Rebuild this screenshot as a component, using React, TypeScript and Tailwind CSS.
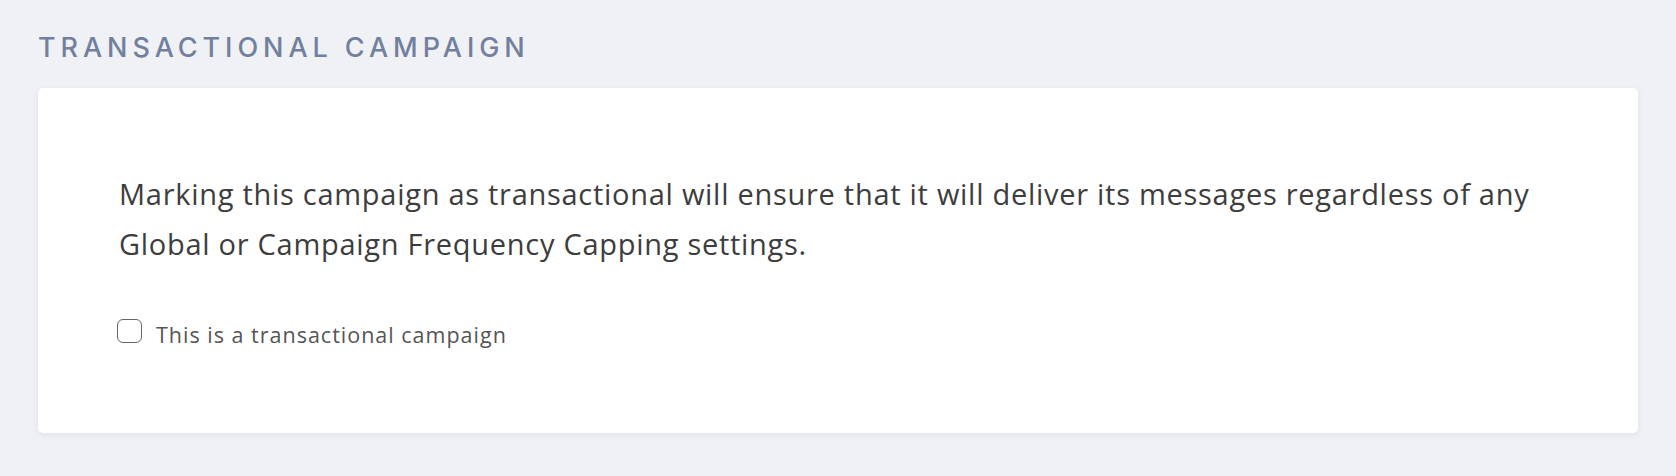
export default function App() {
  return (
    <div className="min-h-[476px] w-full bg-[#eff1f5] px-[38px] pt-[30px]">
      <h2
        className="text-[27px] leading-[36px] font-medium tracking-[0.183em] text-[#72809d] uppercase"
        style={{ fontFamily: "Inter, 'DejaVu Sans', sans-serif" }}
      >
        Transactional Campaign
      </h2>
      <div
        className="mt-[22px] h-[345px] w-[1600px] rounded-[5px] bg-white px-[81px] pt-[81px] shadow-[0_2px_6px_rgba(40,50,80,0.08)]"
        style={{ fontFamily: "'Open Sans', sans-serif" }}
      >
        <p className="max-w-[1450px] text-[29px] leading-[50px] tracking-[0.72px] text-[#3d3d3d]">
          Marking this campaign as transactional will ensure that it will deliver its messages regardless of any Global or Campaign Frequency Capping settings.
        </p>
        <label className="-ml-[2px] mt-[50px] flex items-start gap-[14px] text-[21.5px] leading-[24px] tracking-[1px] text-[#555]">
          <span className="inline-block h-[24px] w-[25px] shrink-0 rounded-[6px] border-[1.5px] border-[#666] bg-white" />
          <span className="pt-[4px]">This is a transactional campaign</span>
        </label>
      </div>
    </div>
  );
}
